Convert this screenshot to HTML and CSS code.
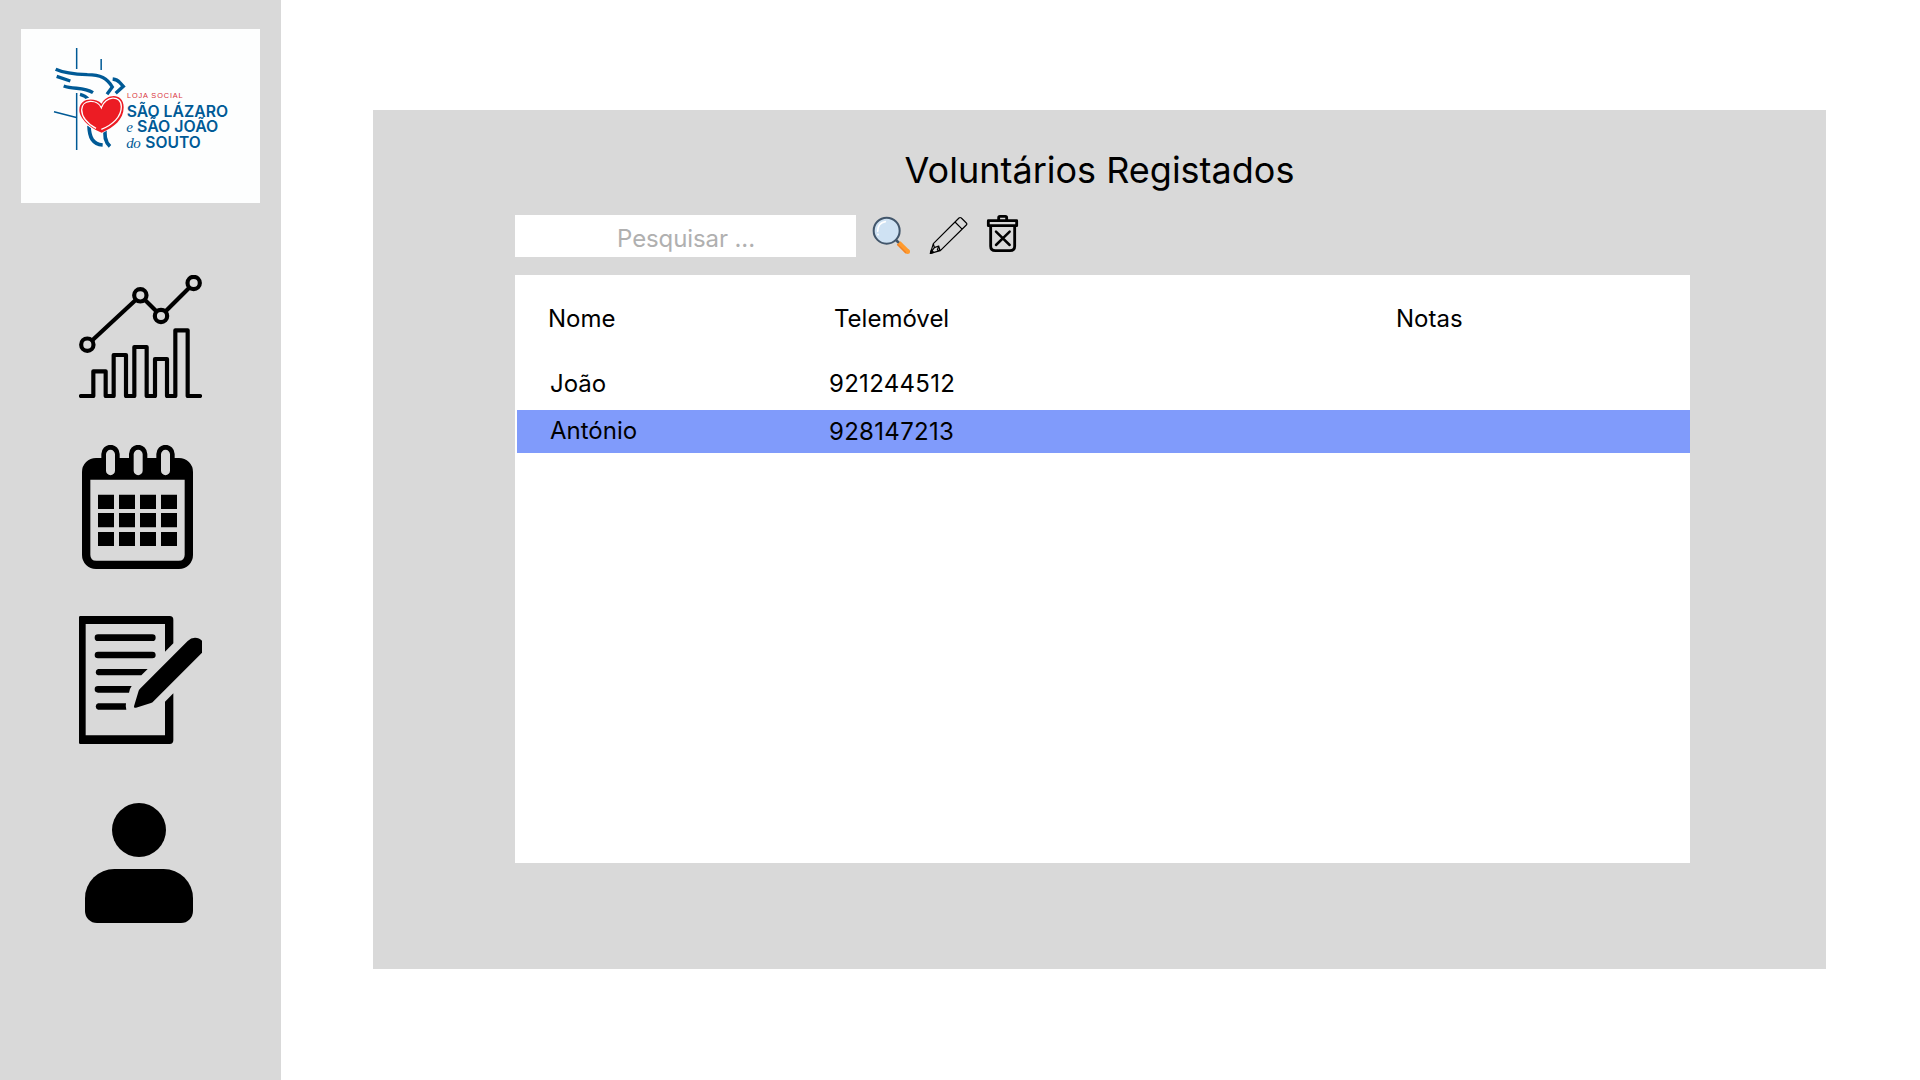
FILE: index.html
```html
<!DOCTYPE html>
<html lang="pt">
<head>
<meta charset="utf-8">
<title>Voluntários Registados</title>
<link rel="stylesheet" href="styles.css">
</head>
<body>
<aside class="sidebar">
  <div class="logo">
    <svg viewBox="63 57 717 522" role="img" aria-label="Loja Social São Lázaro e São João do Souto">
      <g fill="none" stroke="#005a96">
        <path stroke-width="4.500" d="M230 114V177M230 249V420M303.500 147V180M162 305L232 323"/>
        <path stroke-width="10" d="M167 178C195 191 225 193 262 194C302 194 321 204 337 231L321 253M338 207C347 208 354 211 359 217L370 229L347 250M170 199L211 213M191 228C222 239 251 230 279 248M240 253C252 256 260 261 266 269"/>
        <path stroke-width="11" d="M267 347C268 383 278 403 308 405M317 347C311 377 315 396 330 409"/>
      </g>
      <path fill="#fff" stroke="#fff" stroke-width="8" d="M305 366C271 354 239 326 239 300C239 264 285 256 305 283C321 252 370 250 370 292C370 329 334 352 305 366Z"/>
      <path fill="#ec1c24" d="M305 368C271 355 238 326 238 300C238 263 285 262 305 281C321 250 371 248 371 292C371 329 341 353 305 368Z"/>
      <path fill="none" stroke="#fff" stroke-width="4" d="M288 355C262 340 245 320 245 299C246 267 292 267 304 293C316 257 364 254 364 290C364 320 338 345 304 358"/>
      <path fill="#ec1c24" d="M304 348C274 336 252 318 252 298C253 273 293 275 304 302C314 268 355 261 357 290C357 317 333 336 304 348Z"/>
      <text class="logo-tag" x="381" y="265" textLength="167">LOJA SOCIAL</text>
      <g class="logo-name">
        <text x="380" y="320" textLength="304" lengthAdjust="spacingAndGlyphs">SÃO LÁZARO</text>
        <text x="411" y="367" textLength="244" lengthAdjust="spacingAndGlyphs">SÃO JOÃO</text>
        <text x="436" y="414" textLength="166" lengthAdjust="spacingAndGlyphs">SOUTO</text>
      </g>
      <g class="logo-link">
        <text x="379" y="367">e</text>
        <text x="379" y="414" textLength="43">do</text>
      </g>
    </svg>
  </div>
  <nav class="menu">
    <a class="menu-chart" aria-label="Estatísticas">
      <svg viewBox="57 45 369 369" fill="none" stroke="#000" stroke-width="12.500" stroke-linecap="round" stroke-linejoin="round">
        <path d="M63 408H100V334H137V408H161V285H198V408H223V261H260V408H285V297H321V408H346V211H383V408H420"/>
        <circle cx="82" cy="254" r="18.500"/><circle cx="241" cy="106" r="18.500"/><circle cx="303" cy="168" r="18.500"/><circle cx="401" cy="69" r="18.500"/>
        <path d="M97 241L227 120M255 120L289 154M317 154L387 84"/>
      </svg>
    </a>
    <a class="menu-calendar" aria-label="Calendário">
      <svg viewBox="66 45 333 372">
        <path fill-rule="evenodd" d="M108 84H124V72A27.500 27.500 0 0 1 179 72V84H207V72A27.500 27.500 0 0 1 262 72V84H289V72A27.500 27.500 0 0 1 344 72V84H357A42 42 0 0 1 399 126V375A42 42 0 0 1 357 417H108A42 42 0 0 1 66 375V126A42 42 0 0 1 108 84ZM91 149V374Q91 392 109 392H356Q374 392 374 374V149ZM138 73V122A13.500 13.500 0 0 0 165 122V73A13.500 13.500 0 0 0 138 73ZM221 73V122A13.500 13.500 0 0 0 248 122V73A13.500 13.500 0 0 0 221 73ZM303 73V122A13.500 13.500 0 0 0 330 122V73A13.500 13.500 0 0 0 303 73Z"/>
        <path d="M114 194h48v43h-48zM177 194h48v43h-48zM240 194h48v43h-48zM303 194h48v43h-48zM114 249h48v43h-48zM177 249h48v43h-48zM240 249h48v43h-48zM303 249h48v43h-48zM114 306h48v42h-48zM177 306h48v42h-48zM240 306h48v42h-48zM303 306h48v42h-48z"/>
      </svg>
    </a>
    <a class="menu-notes" aria-label="Registos">
      <svg viewBox="57 48 369 384">
        <path d="M61 48H329Q340 48 340 59V130L315 155V72H77V406H315V305L340 280V421Q340 432 329 432H61Q57 432 57 428V52Q57 48 61 48Z"/>
        <path d="M114 103H277a10 10 0 0 1 0 20H114a10 10 0 0 1 0-20zM114 155H277a10 10 0 0 1 0 20H114a10 10 0 0 1 0-20zM114 207H263L244 226H114a10 10 0 0 1 0-19zM114 258H215Q209 266 207 278H114a10 10 0 0 1 0-20zM114 310H198Q196 319 199 329H114a10 10 0 0 1 0-19z"/>
        <path d="M222 319L236 272Q237 269 240 266L383 123Q393 113 405 113Q418 113 426 122V158L282 302Q278 307 273 309L228 323Q221 325 222 319Z"/>
      </svg>
    </a>
    <a class="menu-user" aria-label="Perfil">
      <svg viewBox="75 39 324 360">
        <circle cx="237" cy="120" r="81"/>
        <path d="M163 237H311A88 88 0 0 1 399 325V363A36 36 0 0 1 363 399H111A36 36 0 0 1 75 363V325A88 88 0 0 1 163 237Z"/>
      </svg>
    </a>
  </nav>
</aside>
<main class="panel">
  <h1>Voluntários Registados</h1>
  <div class="toolbar">
    <div class="search">Pesquisar ...</div>
    <svg class="tool-search" viewBox="66 48 117 117">
      <path stroke="#425669" stroke-width="8" d="M135 117L149 131"/>
      <circle cx="110" cy="92" r="39" fill="#cfe2f3" stroke="#42566b" stroke-width="6"/>
      <path fill="none" stroke="#fff" stroke-width="5" stroke-linecap="round" d="M83 94Q83 69 106 65M84 103v1"/>
      <path stroke="#ff9b2e" stroke-width="15" d="M146 129L171 154"/>
      <circle cx="172.500" cy="154.500" r="7.500" fill="#ff9b2e"/>
      <path stroke="#f28124" stroke-width="4" d="M142 133L168 159"/>
    </svg>
    <svg class="tool-edit" viewBox="237 48 117 117" fill="none" stroke="#000" stroke-width="3.500" stroke-linejoin="round">
      <path d="M241 160L250 131L327 54Q330 51 334 54L349 69Q352 72 349 75L271 152ZM315 66L337 88M250 131L253 143L266 138L262 150L271 152M253 143L242 158M266 138L270 151"/>
      <path fill="#000" d="M241 160L244 150L251 157Z"/>
    </svg>
    <svg class="tool-delete" viewBox="408 42 99 117" fill="none" stroke="#000" stroke-width="8.500" stroke-linejoin="round" stroke-linecap="round">
      <path d="M415 62H500V77H415ZM446 59V53Q446 49 450 49H466Q470 49 470 53V59M422 79V139Q422 152 436 152H480Q494 152 494 139V79"/>
      <path stroke-width="7.500" d="M438 95L479 135M479 95L438 135"/>
    </svg>
  </div>
  <section class="table">
    <div class="head"><span>Nome</span><span>Telemóvel</span><span>Notas</span></div>
    <div class="row"><span>João</span><span class="phone">921244512</span></div>
    <div class="row selected"><span>António</span><span class="phone">928147213</span></div>
  </section>
</main>
</body>
</html>
```
FILE: styles.css
```css
* { box-sizing: border-box; }

body {
  margin: 0;
  height: 1080px;
  display: flex;
  align-items: flex-start;
  background: #fff;
  color: #000;
  font: 400 24px/29px Inter, sans-serif;
  overflow: hidden;
}

svg { display: block; width: 100%; height: 100%; }

.sidebar {
  width: 281px;
  height: 1080px;
  padding-top: 29px;
  background: #d9d9d9;
}

.logo {
  width: 239px;
  height: 174px;
  margin-left: 21px;
  background: #fdfefe;
}

.logo-tag { font: 400 22px "Liberation Sans", sans-serif; fill: #d8323b; }
.logo-name { font: 600 47px Inter, sans-serif; fill: #005a96; }
.logo-link { font: italic 400 45px "Liberation Serif", serif; fill: #005a96; }

.menu {
  display: flex;
  flex-direction: column;
  padding: 72px 0 0 79px;
}

.menu-chart { width: 123px; height: 123px; }
.menu-calendar { width: 111px; height: 124px; margin: 47px 0 0 3px; }
.menu-notes { width: 123px; height: 128px; margin-top: 47px; }
.menu-user { width: 108px; height: 120px; margin: 59px 0 0 6px; }

.panel {
  width: 1453px;
  height: 859px;
  margin: 110px 0 0 92px;
  padding: 38px 136px 0 142px;
  background: #d9d9d9;
}

h1 {
  margin: 0 0 22px -6px;
  font-size: 36px;
  font-weight: 400;
  line-height: 44px;
  text-align: center;
}

.toolbar { display: flex; height: 43px; }

.search {
  width: 341px;
  height: 42px;
  margin-top: 1px;
  padding: 9px 0 0 1px;
  background: #fff;
  color: #b0b0b0;
  letter-spacing: -0.1px;
  text-align: center;
}

.tool-search, .tool-edit { width: 39px; height: 39px; margin-top: 2px; }
.tool-search { margin-left: 16px; }
.tool-edit { margin-left: 18px; }
.tool-delete { width: 33px; height: 39px; margin-left: 18px; }

.table {
  height: 588px;
  margin-top: 18px;
  padding-top: 29px;
  background: #fff;
}

.head {
  display: grid;
  grid-template-columns: 286px 562px 1fr;
  margin-bottom: 34px;
  padding-left: 33px;
}

.row {
  display: grid;
  grid-template-columns: 279px 1fr;
  height: 43px;
  margin-left: 2px;
  padding: 2px 0 0 33px;
}

.phone { letter-spacing: 0.3px; }
.selected { padding-top: 6px; background: #809bfb; }
.selected .phone { padding-top: 1px; }
```
